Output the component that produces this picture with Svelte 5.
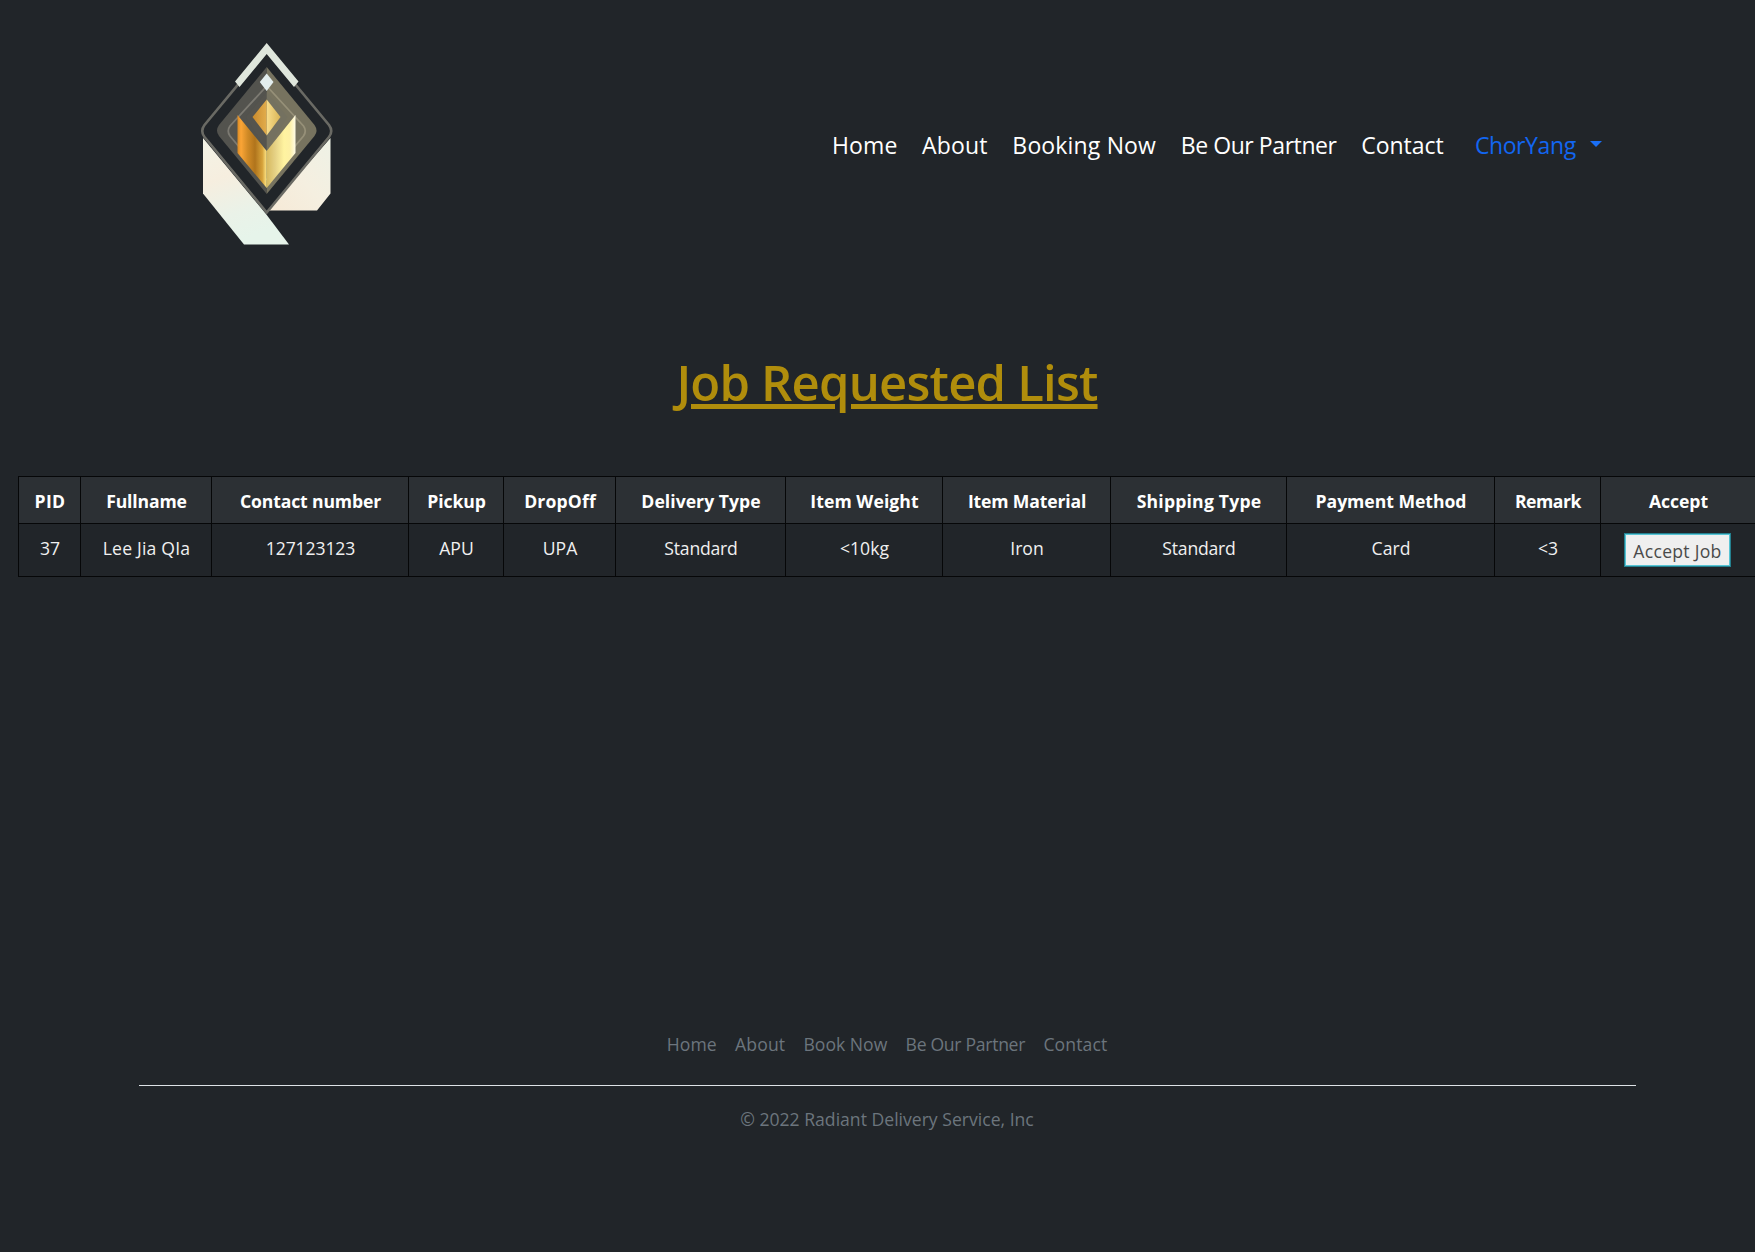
<script>
  // `track` is the letter-spacing in px for each label
  const navLinks = [
    { label: 'Home', track: 0.1 },
    { label: 'About', track: 0.2 },
    { label: 'Booking Now', track: 0.16 },
    { label: 'Be Our Partner', track: -0.42 },
    { label: 'Contact', track: 0 }
  ];

  const columns = [
    { label: 'PID', width: 62, track: 0.4, value: '37', valueTrack: -0.1 },
    { label: 'Fullname', width: 131, track: -0.14, value: 'Lee Jia QIa', valueTrack: 0.2 },
    { label: 'Contact number', width: 197, track: -0.15, value: '127123123', valueTrack: -0.12 },
    { label: 'Pickup', width: 95, track: -0.1, value: 'APU', valueTrack: 0 },
    { label: 'DropOff', width: 112, track: 0.15, value: 'UPA', valueTrack: 0 },
    { label: 'Delivery Type', width: 170, track: 0.04, value: 'Standard', valueTrack: -0.2 },
    { label: 'Item Weight', width: 157, track: 0.06, value: '<10kg', valueTrack: 0 },
    { label: 'Item Material', width: 168, track: -0.16, value: 'Iron', valueTrack: 0 },
    { label: 'Shipping Type', width: 176, track: 0.2, value: 'Standard', valueTrack: -0.2 },
    { label: 'Payment Method', width: 208, track: -0.03, value: 'Card', valueTrack: 0 },
    { label: 'Remark', width: 106, track: -0.45, value: '<3', valueTrack: 0 },
    { label: 'Accept', width: 155, track: -0.05, action: 'Accept Job' }
  ];

  const footerLinks = [
    { label: 'Home', track: 0.1 },
    { label: 'About', track: 0.1 },
    { label: 'Book Now', track: 0 },
    { label: 'Be Our Partner', track: -0.3 },
    { label: 'Contact', track: 0.1 }
  ];
</script>

<div class="viewport">
  <div class="page">
    <header>
      <svg class="logo" viewBox="190 36 154 216" width="154" height="216" role="img" aria-label="Radiant">
        <defs>
          <linearGradient id="goldLeft">
            <stop offset="0" stop-color="#d98a24" />
            <stop offset="0.12" stop-color="#fba536" />
            <stop offset="0.35" stop-color="#d08a26" />
            <stop offset="0.6" stop-color="#b0741c" />
            <stop offset="0.85" stop-color="#d6a23a" />
            <stop offset="1" stop-color="#ffe88a" />
          </linearGradient>
          <linearGradient id="goldRight">
            <stop offset="0" stop-color="#d6b95f" />
            <stop offset="0.3" stop-color="#e6d286" />
            <stop offset="0.6" stop-color="#fff3a0" />
            <stop offset="0.8" stop-color="#fdf0a4" />
            <stop offset="1" stop-color="#fffbe6" />
          </linearGradient>
          <linearGradient id="gemLeft">
            <stop offset="0" stop-color="#c98a2c" />
            <stop offset="1" stop-color="#e2ad4c" />
          </linearGradient>
          <linearGradient id="gemRight">
            <stop offset="0" stop-color="#f8dd8a" />
            <stop offset="1" stop-color="#d9b557" />
          </linearGradient>
          <linearGradient id="legLeft" x1="0" y1="0" x2="0.3" y2="1">
            <stop offset="0" stop-color="#f3f3e6" />
            <stop offset="0.4" stop-color="#f6eedf" />
            <stop offset="0.75" stop-color="#eaf2e8" />
            <stop offset="1" stop-color="#e6f4ea" />
          </linearGradient>
          <linearGradient id="legRight" x1="1" y1="0" x2="0" y2="1">
            <stop offset="0" stop-color="#eef2e6" />
            <stop offset="0.5" stop-color="#f5efe0" />
            <stop offset="1" stop-color="#f6e9d6" />
          </linearGradient>
        </defs>
        <path d="M203 138V193.500L244 244.500H289L266 214Z" fill="url(#legLeft)" />
        <path d="M330.500 138V193.500L317 210.500H270L266 212Z" fill="url(#legRight)" />
        <path d="M266.700 50L204.500 125Q200 131 204.500 137L266.700 212.500L329 137Q333.500 131 329 125Z" fill="#212529" stroke="#6a6a64" stroke-width="2.600" />
        <path d="M266.700 43L235 81.500L239.500 87L266.700 54L294 87L298.500 81.500Z" fill="#dfe6dc" />
        <path d="M266.700 67L219 125Q215 130.500 219 136L266.700 194Z" fill="#53534e" />
        <path d="M266.700 67L314.500 125Q318.500 130.500 314.500 136L266.700 194Z" fill="#77735f" />
        <path d="M266.700 86L230 126Q226.500 131 230 136L266.700 180" fill="none" stroke="#7c7a72" stroke-width="1.800" />
        <path d="M266.700 86L303.500 126Q307 131 303.500 136L266.700 180" fill="none" stroke="#969078" stroke-width="1.800" />
        <path d="M237.500 115L266.700 151V188L237.500 153Z" fill="url(#goldLeft)" />
        <path d="M295.500 115L266.700 151V188L295.500 153Z" fill="url(#goldRight)" />
        <path d="M266.700 92L246 117L266.700 150Z" fill="#55544e" />
        <path d="M266.700 92L287.500 117L266.700 150Z" fill="#747160" />
        <path d="M266.700 99.500L252.500 117L266.700 135.500Z" fill="url(#gemLeft)" />
        <path d="M266.700 99.500L280.500 117L266.700 135.500Z" fill="url(#gemRight)" />
        <path d="M266.700 73.500L273.500 82L266.700 91L259.800 82Z" fill="#e3eeee" />
      </svg>
      <nav>
        {#each navLinks as link}
          <a href="#top" style:letter-spacing="{link.track}px">{link.label}</a>
        {/each}
        <a class="user" href="#top">ChorYang<span class="caret"></span></a>
      </nav>
    </header>

    <main>
      <h1>Job Requested List</h1>
      <table>
        <colgroup>
          {#each columns as col}<col style:width="{col.width}px" />{/each}
        </colgroup>
        <thead>
          <tr>
            {#each columns as col}
              <th style:letter-spacing="{col.track}px">{col.label}</th>
            {/each}
          </tr>
        </thead>
        <tbody>
          <tr>
            {#each columns as col}
              {#if col.action}
                <td class="action"><button>{col.action}</button></td>
              {:else}
                <td style:letter-spacing="{col.valueTrack}px">{col.value}</td>
              {/if}
            {/each}
          </tr>
        </tbody>
      </table>
    </main>

    <footer>
      <ul>
        {#each footerLinks as link}
          <li style:letter-spacing="{link.track}px">{link.label}</li>
        {/each}
      </ul>
      <p>© 2022 Radiant Delivery Service, Inc</p>
    </footer>
  </div>
</div>

<style>
  :global(body) {
    background: #212529;
  }
  .viewport {
    height: 1252px;
    overflow: hidden;
    background: #212529;
    font-family: 'Open Sans', 'Segoe UI', sans-serif;
    font-size: 17.6px;
    line-height: 26px;
    color: #fff;
  }
  .page {
    width: 1774px;
    height: 100%;
    display: flex;
    flex-direction: column;
  }
  header {
    display: flex;
    align-items: center;
    height: 288px;
    padding-left: 190px;
  }
  .logo {
    display: block;
    flex: none;
  }
  nav {
    display: flex;
    gap: 24.600px;
    margin: 2px 0 0 488px;
    font-size: 23px;
    line-height: 36px;
    white-space: nowrap;
  }
  nav a {
    color: #fff;
    text-decoration: none;
  }
  nav .user {
    display: flex;
    align-items: center;
    margin-left: 6.500px;
    color: #1266f1;
    letter-spacing: -0.400px;
  }
  .caret {
    margin: 0 0 2px 14.500px;
    border: 6.500px solid transparent;
    border-top-color: #1a6ff5;
    border-bottom: 0;
  }
  h1 {
    margin: 64px 0;
    text-align: center;
    font-size: 49px;
    line-height: 60px;
    font-weight: 600;
    letter-spacing: -0.800px;
    color: #b08d0c;
    text-decoration: underline;
    text-decoration-thickness: 4.500px;
    text-underline-offset: 3px;
  }
  table {
    width: 1738px;
    margin-left: 18px;
    table-layout: fixed;
    border-spacing: 0;
    border: solid #060708;
    border-width: 1px 0 0 1px;
  }
  th,
  td {
    box-sizing: border-box;
    padding: 10.500px 0 0 1px;
    border: solid #060708;
    border-width: 0 1px 1px 0;
    text-align: center;
    vertical-align: top;
    white-space: nowrap;
  }
  th {
    height: 47px;
    background: #2c3034;
    font-weight: 700;
  }
  td {
    height: 53px;
    color: #f0f0f0;
  }
  .action {
    padding: 9px 1px 0 0;
  }
  button {
    display: block;
    width: 107px;
    height: 34px;
    margin: 0 auto;
    padding: 1px 0 0;
    border: 1px solid #24808f;
    box-shadow: inset 0 0 0 1px #58c4d4;
    background: #efefef;
    color: #4a4a4a;
    font: inherit;
    letter-spacing: 0.280px;
  }
  footer {
    width: 1497px;
    margin: 454px auto 0;
    text-align: center;
    color: #6c757d;
  }
  ul {
    display: flex;
    justify-content: center;
    gap: 18.300px;
    height: 54px;
    margin: 0 0 20px;
    padding: 0;
    border-bottom: 1px solid #dee2e6;
    list-style: none;
  }
  p {
    margin: 0;
  }
</style>
